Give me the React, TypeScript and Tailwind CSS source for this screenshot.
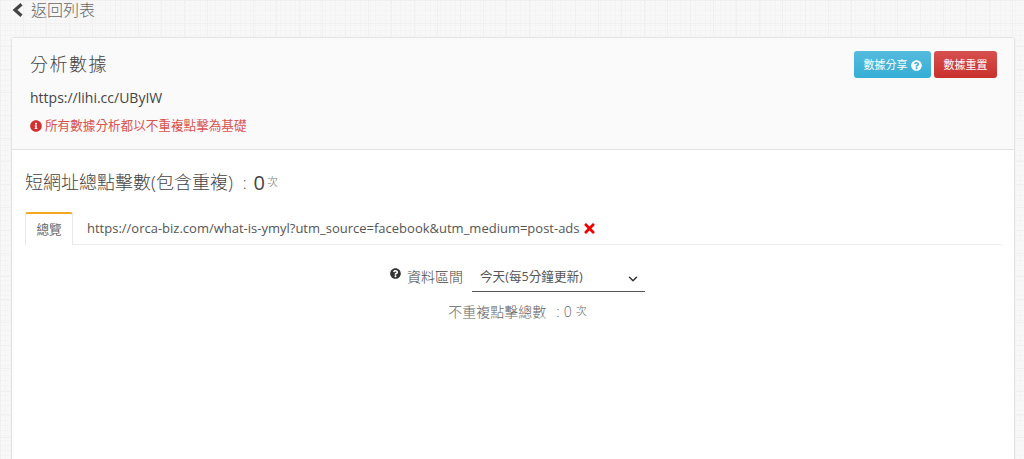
import { ChevronDown } from 'lucide-react';
import { FaInfoCircle, FaQuestionCircle, FaTimes } from 'react-icons/fa';

const font = "font-['Open_Sans','Noto_Sans_CJK_TC',sans-serif]";

export default function App() {
  return (
    <div
      className={`${font} h-[459px] overflow-hidden bg-[#f8f8f8] bg-[linear-gradient(#f0f0f0_1px,transparent_1px),linear-gradient(90deg,#f0f0f0_1px,transparent_1px),linear-gradient(#f4f4f4_1px,transparent_1px),linear-gradient(90deg,#f4f4f4_1px,transparent_1px)] bg-[length:23px_23px,23px_23px,5px_5px,5px_5px] pl-[11px] pr-[9px]`}
    >
      {/* Back link */}
      <div className="flex h-[37px] items-start">
        <div className="-mt-[1px] flex h-[22px] items-center text-[16px] font-light text-[#666666]">
          <svg className="mr-[8px] ml-[1px] h-[14px] w-[11px] text-[#444444]" viewBox="0 0 11 14" fill="none" stroke="currentColor" strokeWidth={3.2}>
            <path d="M9.5 1.2 L3 7 L9.5 12.8" />
          </svg>
          <span>返回列表</span>
        </div>
      </div>

      <div className="h-[430px] overflow-hidden rounded-[3px] border border-[#e3e3e3] bg-white">
        {/* Header */}
        <div className="flex h-[112px] justify-between border-b border-[#e2e2e2] bg-[#fafafa] pl-[18px] pr-[17px]">
          <div>
            <h1 className="mt-[13px] text-[18px] leading-[27px] tracking-[1.5px] font-light text-[#444444]">分析數據</h1>
            <div className="mt-[10px] text-[14px] leading-[20px] text-[#444444]">https://lihi.cc/UByIW</div>
            <div className="mt-[9px] flex items-center text-[12.6px] leading-[18px] text-[#d9534f]">
              <FaInfoCircle className="mr-[3px] h-[12px] w-[12px] text-[#d32f2f]" />
              <span>所有數據分析都以不重複點擊為基礎</span>
            </div>
          </div>
          <div className="mt-[13px] flex gap-[3px]">
            <button className="flex h-[27px] w-[77px] items-center justify-center gap-[3px] rounded-[3px] bg-gradient-to-b from-[#54bbdc] to-[#35aed6] pt-[1px] text-[11px] text-white">
              數據分享
              <FaQuestionCircle className="h-[11px] w-[11px]" />
            </button>
            <button className="flex h-[27px] w-[63px] items-center justify-center rounded-[3px] bg-gradient-to-b from-[#d64f4f] to-[#c9302c] pt-[1px] text-[11px] text-white">
              數據重置
            </button>
          </div>
        </div>

        {/* Body */}
        <div className="pl-[13px] pr-[12px]">
          <div className="mt-[19px] flex h-[27px] items-center font-light text-[#444444]">
            <span className="text-[18px]">短網址總點擊數(包含重複)</span>
            <span className="ml-[10px] text-[16px]">:</span>
            <span className="ml-[7px] text-[20px] font-normal">0</span>
            <span className="ml-[2px] text-[11px] text-[#777777]">次</span>
          </div>

          {/* Tabs */}
          <div className="mt-[16px] flex h-[33px] items-stretch border-b border-[#eeeeee]">
            <div className="flex h-[33px] w-[48px] items-center justify-center rounded-t-[3px] border-x border-t-2 border-x-[#e8e8e8] border-t-[#f5a623] bg-white pt-[1px] text-[12.6px] text-[#666666]">
              總覽
            </div>
            <div className="ml-[14px] flex items-center pt-[1px] text-[13px] text-[#555555]">
              <span>https://orca-biz.com/what-is-ymyl?utm_source=facebook&amp;utm_medium=post-ads</span>
              <FaTimes className="ml-[3px] h-[15px] w-[13px] text-[#f00000]" />
            </div>
          </div>

          {/* Range */}
          <div className="mt-[19px] flex justify-center pl-[8px]">
            <div className="flex h-[28px] items-start">
              <FaQuestionCircle className="mr-[6px] mt-[4px] h-[11px] w-[11px] text-[#333333]" />
              <span className="mt-[3px] text-[14px] leading-[20px] font-light text-[#444444]">資料區間</span>
              <div className="ml-[9px] flex h-[28px] w-[173px] items-center justify-between border-b border-[#555555] pl-[8px] pr-[5px] text-[12.6px] text-[#555555]">
                <span>今天(每5分鐘更新)</span>
                <ChevronDown className="mt-[3px] h-[14px] w-[14px] text-[#333333]" strokeWidth={2.5} />
              </div>
            </div>
          </div>
          <div className="mt-[9px] flex items-center justify-center pl-[8px] text-[14px] font-light text-[#666666]">
            <span>不重複點擊總數</span>
            <span className="ml-[10px]">:</span>
            <span className="ml-[4px]">0</span>
            <span className="ml-[4px] text-[11px]">次</span>
          </div>
        </div>
      </div>
    </div>
  );
}
